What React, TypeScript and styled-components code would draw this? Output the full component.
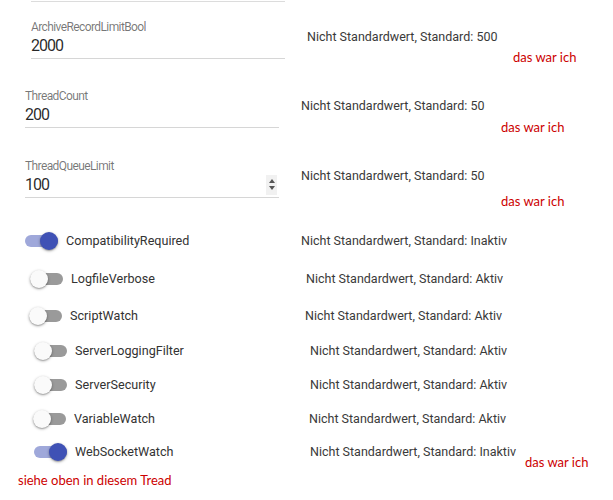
import React from "react";
import styled, { createGlobalStyle } from "styled-components";

const GlobalStyle = createGlobalStyle`
  html, body {
    margin: 0;
    padding: 0;
    background: #ffffff;
  }
  body {
    font-family: Roboto, "Liberation Sans", sans-serif;
    color: rgba(0, 0, 0, 0.87);
  }
`;

const Page = styled.div`
  width: 613px;
  height: 500px;
  overflow: hidden;
  background: #ffffff;
`;

const TopRule = styled.div`
  margin: 1px 0 0 31px;
  width: 254px;
  height: 1px;
  background: #dcdcdc;
`;

type RowProps = { indent: number; height: number; top?: number };

const FieldRow = styled.div<RowProps>`
  display: flex;
  align-items: flex-start;
  padding-left: ${(p) => p.indent}px;
  margin-top: ${(p) => p.top || 0}px;
  height: ${(p) => p.height}px;
`;

const Field = styled.div`
  width: 254px;
  flex-shrink: 0;
  border-bottom: 1px solid #d6d6d6;
  padding-bottom: 3px;
`;

const FieldLabel = styled.div`
  font-size: 12px;
  line-height: 14px;
  height: 14px;
  letter-spacing: -0.6px;
  color: rgba(0, 0, 0, 0.54);
  margin-bottom: 2px;
`;

const FieldValue = styled.div`
  display: flex;
  align-items: center;
  justify-content: space-between;
  font-size: 16px;
  line-height: 19px;
  height: 19px;
  letter-spacing: -1px;
  color: rgba(0, 0, 0, 0.85);
`;

const Spinner = styled.div`
  width: 11px;
  height: 20px;
  margin-right: 2px;
  background: #f1f1f1;
  display: flex;
  flex-direction: column;
  align-items: center;
  justify-content: center;
  gap: 3px;
`;

const Arrow = styled.div<{ up?: boolean }>`
  width: 0;
  height: 0;
  border-left: 3px solid transparent;
  border-right: 3px solid transparent;
  ${(p) =>
    p.up
      ? "border-bottom: 4px solid #555;"
      : "border-top: 4px solid #555;"}
`;

const DefaultCell = styled.div<{ gap: number }>`
  margin-left: ${(p) => p.gap}px;
  margin-top: 9px;
  display: flex;
  flex-direction: column;
  align-items: flex-start;
`;

const DefaultText = styled.div`
  font-size: 12.5px;
  line-height: 16px;
  height: 16px;
  white-space: nowrap;
  color: #3a3a3a;
`;

const Note = styled.div<{ left: number; drop: number }>`
  font-family: Lato, "Open Sans", sans-serif;
  font-size: 13px;
  line-height: 16px;
  color: #cc0000;
  white-space: nowrap;
  margin-left: ${(p) => p.left}px;
  margin-top: ${(p) => p.drop}px;
`;

const SwitchSection = styled.div`
  display: flex;
  flex-direction: column;
`;

const SwitchRow = styled.div<RowProps>`
  display: flex;
  align-items: center;
  padding-left: ${(p) => p.indent}px;
  height: ${(p) => p.height}px;
`;

const SwitchCell = styled.div`
  width: 276px;
  flex-shrink: 0;
  display: flex;
  align-items: center;
`;

const Track = styled.div<{ on: boolean }>`
  width: 33px;
  height: 12px;
  border-radius: 6px;
  flex-shrink: 0;
  display: flex;
  align-items: center;
  justify-content: ${(p) => (p.on ? "flex-end" : "flex-start")};
  background: ${(p) => (p.on ? "#9fa8da" : "#9a9a9a")};
`;

const Thumb = styled.div<{ on: boolean }>`
  width: 18px;
  height: 18px;
  border-radius: 50%;
  flex-shrink: 0;
  background: ${(p) => (p.on ? "#3f51b5" : "#fafafa")};
  box-shadow: 0 1px 3px rgba(0, 0, 0, 0.35), 0 1px 1px rgba(0, 0, 0, 0.14);
`;

const SwitchLabel = styled.span`
  margin-left: 8px;
  font-size: 12.6px;
  line-height: 16px;
  color: #333333;
  white-space: nowrap;
`;

const InlineCell = styled.div`
  display: flex;
  align-items: flex-start;
  height: 16px;
`;

const Footnote = styled.div`
  margin: 3px 0 0 18px;
  font-family: Lato, "Open Sans", sans-serif;
  font-size: 13px;
  line-height: 16px;
  color: #cc0000;
`;

type FieldDef = {
  label: string;
  value: string;
  def: string;
  indent: number;
  top: number;
  height: number;
  noteLeft: number;
  noteDrop: number;
  spinner?: boolean;
};

const fields: FieldDef[] = [
  { label: "ArchiveRecordLimitBool", value: "2000", def: "500", indent: 31, top: 18, height: 69, noteLeft: 206, noteDrop: 4 },
  { label: "ThreadCount", value: "200", def: "50", indent: 25, top: 0, height: 70, noteLeft: 200, noteDrop: 5 },
  { label: "ThreadQueueLimit", value: "100", def: "50", indent: 25, top: 0, height: 64, noteLeft: 200, noteDrop: 9, spinner: true },
];

type SwitchDef = {
  name: string;
  on: boolean;
  indent: number;
  height: number;
  note?: boolean;
};

const switches: SwitchDef[] = [
  { name: "CompatibilityRequired", on: true, indent: 25, height: 36 },
  { name: "LogfileVerbose", on: false, indent: 30, height: 39 },
  { name: "ScriptWatch", on: false, indent: 29, height: 36 },
  { name: "ServerLoggingFilter", on: false, indent: 34, height: 34 },
  { name: "ServerSecurity", on: false, indent: 34, height: 34 },
  { name: "VariableWatch", on: false, indent: 33, height: 33 },
  { name: "WebSocketWatch", on: true, indent: 34, height: 34, note: true },
];

export default function App() {
  return (
    <Page>
      <GlobalStyle />
      <TopRule />
      {fields.map((f) => (
        <FieldRow key={f.label} indent={f.indent} top={f.top} height={f.height}>
          <Field>
            <FieldLabel>{f.label}</FieldLabel>
            <FieldValue>
              <span>{f.value}</span>
              {f.spinner && (
                <Spinner>
                  <Arrow up />
                  <Arrow />
                </Spinner>
              )}
            </FieldValue>
          </Field>
          <DefaultCell gap={22}>
            <DefaultText>Nicht Standardwert, Standard: {f.def}</DefaultText>
            <Note left={f.noteLeft} drop={f.noteDrop}>
              das war ich
            </Note>
          </DefaultCell>
        </FieldRow>
      ))}
      <SwitchSection>
        {switches.map((s) => (
          <SwitchRow key={s.name} indent={s.indent} height={s.height}>
            <SwitchCell>
              <Track on={s.on}>
                <Thumb on={s.on} />
              </Track>
              <SwitchLabel>{s.name}</SwitchLabel>
            </SwitchCell>
            <InlineCell>
              <DefaultText>
                Nicht Standardwert, Standard: {s.on ? "Inaktiv" : "Aktiv"}
              </DefaultText>
              {s.note && (
                <Note left={9} drop={10}>
                  das war ich
                </Note>
              )}
            </InlineCell>
          </SwitchRow>
        ))}
      </SwitchSection>
      <Footnote>siehe oben in diesem Tread</Footnote>
    </Page>
  );
}
